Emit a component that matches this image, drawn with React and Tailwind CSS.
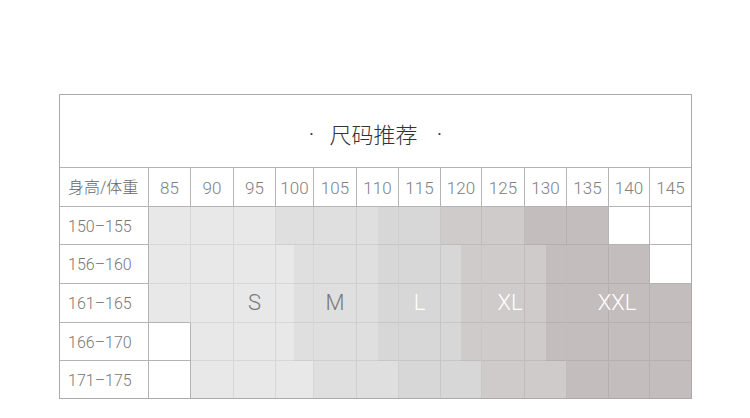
import React from "react";

const COLS = ["85", "90", "95", "100", "105", "110", "115", "120", "125", "130", "135", "140", "145"];

// column widths include the 1px right line; the last one sits against the outer border
const GRID = "grid grid-cols-[89px_42px_43px_42px_38px_43px_42px_42px_41px_43px_42px_42px_41px_41px]";

const FILL = {
  S: "bg-[#e8e8e8]",
  M: "bg-[#dfdfdf]",
  L: "bg-[#d7d7d7]",
  XL: "bg-[#cfcbcb]",
  XXL: "bg-[#c4bdbd]",
  W: "bg-white",
  "S|M": "bg-[linear-gradient(90deg,#e8e8e8_50%,#dfdfdf_50%)]",
  "M|L": "bg-[linear-gradient(90deg,#dfdfdf_50%,#d7d7d7_50%)]",
  "L|XL": "bg-[linear-gradient(90deg,#d7d7d7_50%,#cfcbcb_50%)]",
  "XL|XXL": "bg-[linear-gradient(90deg,#cfcbcb_50%,#c4bdbd_50%)]",
};

const ROWS = [
  {
    label: "150–155",
    h: "h-[38px]",
    cells: ["S", "S", "S", "M", "M", "M|L", "L", "XL", "XL", "XXL", "XXL", "W", "W"],
  },
  {
    label: "156–160",
    h: "h-[39px]",
    cells: ["S", "S", "S", "S|M", "M", "M|L", "L", "L|XL", "XL", "XL|XXL", "XXL", "XXL", "W"],
  },
  {
    label: "161–165",
    h: "h-[39px]",
    cells: ["S", "S", "S", "S|M", "M", "M|L", "L", "L|XL", "XL", "XL|XXL", "XXL", "XXL", "XXL"],
    sizes: {
      2: { text: "S", cls: "text-[#7a7a7a]" },
      4: { text: "M", cls: "text-[#7a7a7a]" },
      6: { text: "L", cls: "text-white" },
      8: { text: "XL", cls: "text-white translate-x-[7px]" },
      11: { text: "XXL", cls: "text-white -translate-x-[12px]" },
    },
  },
  {
    label: "166–170",
    h: "h-[38px]",
    cells: ["W", "S", "S", "S|M", "M", "M|L", "L", "L|XL", "XL", "XL|XXL", "XXL", "XXL", "XXL"],
  },
  {
    label: "171–175",
    h: "h-[37px]",
    cells: ["W", "S", "S", "S", "M", "M", "L", "L", "XL", "XL", "XXL", "XXL", "XXL"],
    last: true,
  },
];

const SizeCell = ({ fill, isLastCol, isLastRow, size }) => {
  const white = fill === "W";
  const lines = white
    ? "border-[#b4b4b4] shadow-[-1px_-1px_0_0_#b4b4b4]"
    : "border-black/[0.07]";
  return (
    <div
      className={`${FILL[fill]} ${lines} ${isLastCol ? "" : "border-r"} ${isLastRow ? "" : "border-b"} flex items-center justify-center`}
    >
      {size && (
        <span className={`text-[22px] font-light leading-none whitespace-nowrap ${size.cls}`}>
          {size.text}
        </span>
      )}
    </div>
  );
};

export default function App() {
  return (
    <div className="w-[750px] h-[418px] bg-white pt-[94px] pl-[59px] font-[Roboto,'Noto_Sans_CJK_SC',sans-serif]">
      <div className="w-[633px] border border-[#aaaaaa]">
        {/* Title */}
        <div className="h-[73px] border-b border-[#b4b4b4] flex items-center justify-center pt-[8px] text-[#333] text-[22px] font-light">
          <span className="text-[24px]">·</span>
          <span className="ml-[15px] mr-[19px]">尺码推荐</span>
          <span className="text-[24px]">·</span>
        </div>

        {/* Header */}
        <div className={`${GRID} h-[39px] text-[#808080] text-[17px] font-light`}>
          <div className="border-r border-b border-[#b4b4b4] flex items-center pl-[8px] pt-[2px] text-[16px] text-[#666]">
            身高/体重
          </div>
          {COLS.map((c, i) => (
            <div
              key={c}
              className={`${i === COLS.length - 1 ? "" : "border-r"} border-b border-[#b4b4b4] flex items-center justify-center pt-[4px]`}
            >
              {c}
            </div>
          ))}
        </div>

        {/* Rows */}
        {ROWS.map((row) => (
          <div key={row.label} className={`${GRID} ${row.h}`}>
            <div
              className={`border-r ${row.last ? "" : "border-b"} border-[#b4b4b4] flex items-center pl-[8px] pt-[2px] text-[16px] text-[#777] font-light`}
            >
              {row.label}
            </div>
            {row.cells.map((fill, i) => (
              <SizeCell
                key={i}
                fill={fill}
                isLastCol={i === row.cells.length - 1}
                isLastRow={row.last}
                size={row.sizes && row.sizes[i]}
              />
            ))}
          </div>
        ))}
      </div>
    </div>
  );
}
